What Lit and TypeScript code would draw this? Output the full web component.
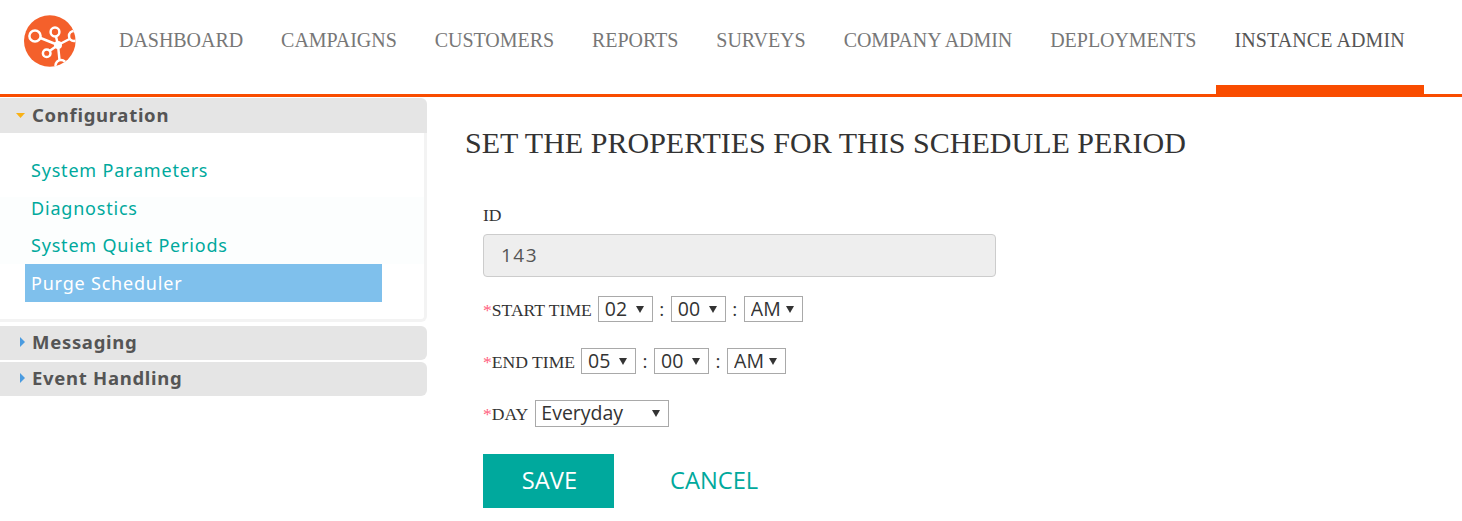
import { LitElement, html, css, svg } from "lit";
import { customElement } from "lit/decorators.js";

const NAV = ["DASHBOARD", "CAMPAIGNS", "CUSTOMERS", "REPORTS", "SURVEYS", "COMPANY ADMIN", "DEPLOYMENTS", "INSTANCE ADMIN"];
const HOURS = ["01","02","03","04","05","06","07","08","09","10","11","12"];

const logo = svg`
  <defs><clipPath id="lc"><circle cx="25.800" cy="26" r="25.800"/></clipPath></defs>
  <circle cx="25.800" cy="26" r="25.800" fill="#f4602b"/>
  <g clip-path="url(#lc)" fill="none" stroke="#fff" stroke-width="2.500">
    <circle cx="11" cy="21" r="5.600"/>
    <circle cx="31" cy="17" r="4.400"/>
    <circle cx="22.700" cy="38.300" r="3.800"/>
    <circle cx="50" cy="21" r="5"/>
    <circle cx="37" cy="50.500" r="5.500"/>
    <path d="M16.500 23L34 30M32 21.500L34 30M25.500 36L34 30M45.500 24L34 30M35.500 45L34 30"/>
  </g>
  <circle cx="34" cy="30" r="4" fill="#fff"/>`;

@customElement("app-root")
export class AppRoot extends LitElement {
  static styles = css`
    :host { display: block; height: 521px; overflow: hidden; background: #fff; font-family: "Liberation Serif", serif; }
    .top { display: flex; align-items: flex-start; height: 94px; border-bottom: 3px solid #f94c00; box-sizing: content-box; }
    .logo { width: 52px; height: 52px; margin: 15px 24px 0; flex: none; }
    nav { display: flex; height: 97px; }
    nav a { box-sizing: border-box; height: 97px; padding: 30px 19px 0; font-size: 20px; line-height: 21px; letter-spacing: -0.04px; color: #777; white-space: nowrap; }
    nav a.on { width: 208px; margin-left: 1px; padding: 30px 0 0 18px; letter-spacing: 0.100px; color: #555; border-bottom: 12px solid #f94c00; }
    .page { display: flex; }
    aside { width: 427px; flex: none; padding-top: 1px; font-family: "Noto Sans", sans-serif; }
    .head { display: flex; align-items: center; box-sizing: border-box; height: 34px; padding-bottom: 4px; border-radius: 0 6px 6px 0; background: #e5e5e5; color: #555; font-size: 18.500px; font-weight: bold; letter-spacing: 0.700px; }
    .head.open { height: 35px; padding-bottom: 3px; border-radius: 0 6px 0 0; }
    .head + .head { margin-top: 2px; }
    .tri { width: 32px; flex: none; display: flex; justify-content: flex-end; margin-top: 2px; padding-right: 7px; box-sizing: border-box; }
    .body { box-sizing: border-box; height: 189px; padding: 18px 0 0 25px; margin-bottom: 4px; border: solid #f3f3f3; border-width: 0 3px 3px 0; border-radius: 0 0 6px 0; background: linear-gradient(#fff 64px, #fcfefe 64px, #fcfefe 131px, #fff 131px); }
    .body a { display: block; box-sizing: border-box; width: 357px; height: 37.700px; line-height: 39.700px; padding-left: 6px; font-size: 18px; letter-spacing: 0.800px; color: #00a99d; white-space: nowrap; }
    .body a.on { background: #7fc0ec; color: #fff; }
    main { padding-left: 38px; flex: 1; color: #333; }
    h1 { margin: 27px 0 0; font-size: 30px; line-height: 38px; font-weight: normal; white-space: nowrap; letter-spacing: 0.020px; }
    form { margin: 43px 0 0 18px; font-size: 17.600px; }
    .id { display: block; line-height: 20px; margin-bottom: 9px; }
    input { display: block; box-sizing: border-box; width: 513px; height: 43px; padding: 0 17px 2px; border: 1px solid #ccc; border-radius: 4px; background: #eee; color: #555; font: 19px "Open Sans", sans-serif; letter-spacing: 1.500px; }
    .row { display: flex; align-items: center; height: 26px; margin-top: 26px; white-space: nowrap; }
    .row.first { margin-top: 19px; }
    .row.day { height: 27px; }
    .lbl { position: relative; top: 1px; }
    .req { color: #ff5f7e; }
    .sel { position: relative; display: block; box-sizing: border-box; height: 26px; margin-left: 6px; flex: none; overflow: hidden; border: 1px solid #a9a9a9; background: #fff; }
    .day .sel { height: 27px; margin-left: 7px; }
    .sep { width: 18px; text-align: center; font: 19px "Open Sans", sans-serif; }
    .sep + .sel { margin-left: 0; }
    select { display: block; appearance: none; box-sizing: border-box; height: 28px; width: 100%; margin-top: -3px; padding: 0 0 0 6px; border: 0; border-radius: 0; background: transparent; color: #333; font: 19.500px "Open Sans", sans-serif; }
    .day select { height: 29px; padding-left: 5px; }
    .sel svg { position: absolute; right: 8px; top: 9px; pointer-events: none; }
    .w55 { width: 55px; } .w59 { width: 59px; } .w134 { width: 134px; }
    .actions { display: flex; align-items: center; margin-top: 27px; font: 23.700px "Open Sans", sans-serif; }
    button { border: 0; font: inherit; padding: 0 0 3px; }
    .save { width: 131px; height: 54px; padding-left: 2px; background: #00a99d; color: #fff; }
    .cancel { margin-left: 56px; background: none; color: #00a99d; }
  `;

  private arrow() {
    return html`<svg width="8" height="7" viewBox="0 0 8 7"><path d="M0 0h8L4 7z" fill="#333"/></svg>`;
  }

  private sel(val: string, opts: string[], w: string) {
    return html`<span class="sel ${w}"><select>${opts.map((o) => html`<option ?selected=${o === val}>${o}</option>`)}</select>${this.arrow()}</span>`;
  }

  private time(h: string) {
    return html`${this.sel(h, HOURS, "w55")}<span class="sep">:</span>${this.sel("00", ["00","15","30","45"], "w55")}<span class="sep">:</span>${this.sel("AM", ["AM","PM"], "w59")}`;
  }

  render() {
    return html`
      <header class="top">
        <svg class="logo" viewBox="0 0 52 52">${logo}</svg>
        <nav>${NAV.map((n, i) => html`<a class=${i === 7 ? "on" : ""}>${n}</a>`)}</nav>
      </header>
      <div class="page">
        <aside>
          <div class="head open"><span class="tri"><svg width="9" height="5" viewBox="0 0 9 5"><path d="M0 0h9L4.500 5z" fill="#f9b115"/></svg></span>Configuration</div>
          <div class="body">
            <a>System Parameters</a><a>Diagnostics</a><a>System Quiet Periods</a><a class="on">Purge Scheduler</a>
          </div>
          <div class="head"><span class="tri"><svg width="5" height="10" viewBox="0 0 5 10"><path d="M0 0l5 5-5 5z" fill="#4a9be0"/></svg></span>Messaging</div>
          <div class="head"><span class="tri"><svg width="5" height="10" viewBox="0 0 5 10"><path d="M0 0l5 5-5 5z" fill="#4a9be0"/></svg></span>Event Handling</div>
        </aside>
        <main>
          <h1>SET THE PROPERTIES FOR THIS SCHEDULE PERIOD</h1>
          <form>
            <label class="id">ID</label>
            <input disabled value="143" />
            <div class="row first"><span class="lbl"><span class="req">*</span>START TIME</span>${this.time("02")}</div>
            <div class="row"><span class="lbl"><span class="req">*</span>END TIME</span>${this.time("05")}</div>
            <div class="row day"><span class="lbl"><span class="req">*</span>DAY</span>${this.sel("Everyday", ["Everyday","Weekdays","Weekends"], "w134")}</div>
            <div class="actions"><button type="button" class="save">SAVE</button><button type="button" class="cancel">CANCEL</button></div>
          </form>
        </main>
      </div>
    `;
  }
}
